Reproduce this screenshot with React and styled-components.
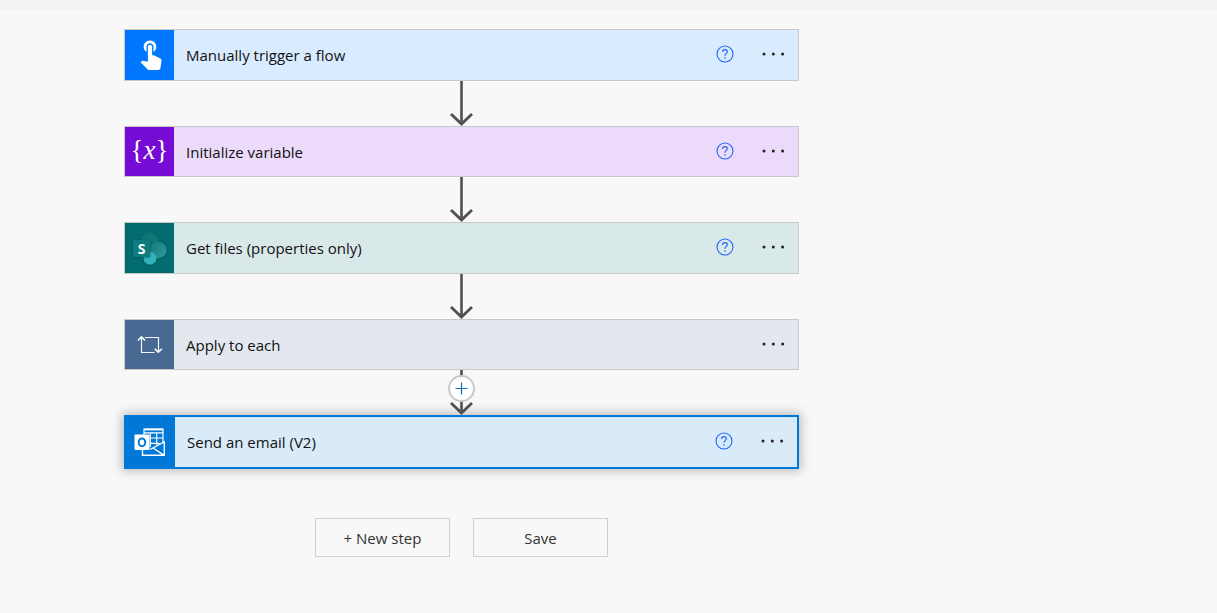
import React from "react";
import styled, { createGlobalStyle } from "styled-components";

const GlobalStyle = createGlobalStyle`
  *, *::before, *::after { box-sizing: border-box; }
  body {
    margin: 0;
    background: #f8f8f8;
    color: #111;
    font-family: "Segoe UI", "Open Sans", "Noto Sans", sans-serif;
    font-size: 15px;
    line-height: 20px;
  }
`;

const TopStrip = styled.header`
  height: 10px;
  background: #f3f3f3;
`;

const Canvas = styled.main`
  padding: 19px 124px 56px;
`;

const Flow = styled.div`
  display: flex;
  flex-direction: column;
  align-items: center;
  max-width: 675px;
`;

const Card = styled.section`
  display: flex;
  align-items: stretch;
  width: 100%;
  height: ${(p) => (p.$selected ? 54 : p.$compact ? 51 : 52)}px;
  background: ${(p) => p.$tint};
  border: ${(p) => (p.$selected ? "2px solid #0078d7" : "1px solid #c8c8c8")};
  box-shadow: ${(p) => (p.$selected ? "0 0 10px 2px rgba(0, 0, 0, 0.25)" : "none")};
`;

const IconTile = styled.div`
  display: flex;
  align-items: center;
  flex: none;
  width: 49px;
  background: ${(p) => p.$color};
`;

const Title = styled.h2`
  flex: 1;
  align-self: center;
  margin: 0;
  padding-left: 12px;
  font-size: 15px;
  font-weight: 400;
  line-height: 20px;
`;

const Actions = styled.div`
  display: flex;
  align-items: center;
  gap: 23px;
  padding: 0 9px 2px 0;
`;

const IconButton = styled.button`
  display: flex;
  align-items: center;
  justify-content: center;
  width: ${(p) => p.$width}px;
  height: 32px;
  padding: 0;
  border: 0;
  background: none;
  color: ${(p) => p.$color};
  cursor: pointer;
`;

const Connector = styled.div`
  position: relative;
  display: flex;
  justify-content: center;
  height: 45px;
`;

const InsertButton = styled.button`
  position: absolute;
  top: 5px;
  display: flex;
  align-items: center;
  justify-content: center;
  width: 27px;
  height: 27px;
  padding: 0;
  border: 2px solid #c8c8c8;
  border-radius: 50%;
  background: #fff;
  cursor: pointer;
`;

const Footer = styled.div`
  display: flex;
  gap: 23px;
  margin-top: 49px;
`;

const FooterButton = styled.button`
  width: 135px;
  height: 39px;
  padding: 0;
  border: 1px solid #d0d0d0;
  background: transparent;
  color: #333;
  font: inherit;
  cursor: pointer;
`;

const TileSvg = ({ children }) => (
  <svg width="49" height="49" viewBox="0 0 49 49" aria-hidden="true">
    {children}
  </svg>
);

const TouchIcon = () => (
  <TileSvg>
    <path
      transform="translate(8.9 5.3) scale(1.4)"
      fill="#fff"
      d="M9 11.24V7.5C9 6.12 10.12 5 11.5 5S14 6.12 14 7.5v3.74c1.21-.81 2-2.18 2-3.74C16 5.01 13.99 3 11.5 3S7 5.01 7 7.5c0 1.56.79 2.93 2 3.74zm9.84 4.63l-4.54-2.26c-.17-.07-.35-.11-.54-.11H13v-6c0-.83-.67-1.5-1.5-1.5S10 6.67 10 7.5v10.74l-3.43-.72c-.08-.01-.15-.03-.24-.03-.31 0-.59.13-.79.33l-.79.8 4.94 4.94c.27.27.65.44 1.06.44h6.79c.75 0 1.33-.55 1.44-1.28l.75-5.27c.01-.07.02-.14.02-.2 0-.62-.38-1.16-.91-1.38z"
    />
  </TileSvg>
);

const VariableIcon = () => (
  <TileSvg>
    <text
      x="24.5"
      y="32"
      fill="#fff"
      fontFamily="'Liberation Serif', serif"
      fontSize="27"
      textAnchor="middle"
    >
      {"{"}
      <tspan fontStyle="italic">x</tspan>
      {"}"}
    </text>
  </TileSvg>
);

const SharePointIcon = () => (
  <TileSvg>
    <defs>
      <filter id="sp-shadow" x="-40%" y="-40%" width="180%" height="180%">
        <feDropShadow dx="0" dy="0.5" stdDeviation="1.3" floodColor="#00302f" floodOpacity="0.5" />
      </filter>
      <linearGradient id="sp-right" x1="0" y1="0" x2="1" y2="1">
        <stop offset="0" stopColor="#16797c" />
        <stop offset="1" stopColor="#2d9ca0" />
      </linearGradient>
    </defs>
    <g filter="url(#sp-shadow)">
      <circle cx="24.5" cy="17.3" r="9" fill="#0e7679" />
      <circle cx="33.3" cy="26" r="8.2" fill="url(#sp-right)" />
      <circle cx="25" cy="34.2" r="6.4" fill="#30b3bb" />
    </g>
    <rect x="8" y="16" width="17" height="17" rx="1" fill="#0a7b7e" filter="url(#sp-shadow)" />
    <text
      x="16.5"
      y="29.500"
      fill="#fff"
      fontFamily="'Open Sans', sans-serif"
      fontSize="14"
      fontWeight="700"
      textAnchor="middle"
    >
      S
    </text>
  </TileSvg>
);

const LoopIcon = () => (
  <TileSvg>
    <g fill="none" stroke="#f2f5f9" strokeWidth="1.2">
      <path d="M16.500 17V32.500H29.500" />
      <path d="M20 17.500H33.500V32" />
      <path d="M13 20.300L16.500 17L20 20.300" strokeWidth="1.700" />
      <path d="M29.700 28.900L33.300 32.200L36.900 28.900" strokeWidth="1.700" />
    </g>
  </TileSvg>
);

const OutlookIcon = () => (
  <TileSvg>
    <g fill="none" stroke="#fff" strokeWidth="1.2">
      <path d="M18 28V11H37V25" />
      <path d="M18 11.500H37" strokeWidth="1.800" />
      <path d="M24.300 14.500V29M30.700 14.500V27M18 14.800H37M18 20H37M24 25.400H34" />
      <path d="M16.500 32V37.300H38.300V24L24 31.500M27 30L38.300 37.300" strokeWidth="1.400" />
    </g>
    <rect x="8.500" y="16.500" width="15" height="15.500" rx="1" fill="#fff" />
    <ellipse cx="16" cy="24.300" rx="3.300" ry="3.900" fill="none" stroke="#0078d7" strokeWidth="2" />
  </TileSvg>
);

const HelpIcon = () => (
  <svg width="18" height="18" viewBox="0 0 18 18" fill="none" stroke="currentColor" aria-hidden="true">
    <circle cx="9" cy="9" r="8" strokeWidth="1.1" />
    <path d="M6.600 6.900C6.600 5.400 7.600 4.600 9 4.600s2.400.9 2.400 2.100C11.400 8.400 9 8.600 9 10.800" strokeWidth="1.1" />
    <circle cx="9" cy="13" r="0.8" fill="currentColor" stroke="none" />
  </svg>
);

const MoreIcon = () => (
  <svg width="24" height="6" viewBox="0 0 24 6" fill="currentColor" aria-hidden="true">
    <circle cx="3" cy="3" r="1.500" />
    <circle cx="12.300" cy="3" r="1.500" />
    <circle cx="21.600" cy="3" r="1.500" />
  </svg>
);

const ArrowDown = () => (
  <svg width="27" height="45" viewBox="0 0 27 45" fill="none" stroke="#505050" aria-hidden="true">
    <path d="M13.500 0V43" strokeWidth="2.600" />
    <path d="M3 33L13.500 43L24 33" strokeWidth="2.800" />
  </svg>
);

const steps = [
  { title: "Manually trigger a flow", color: "#0077ff", tint: "#d9ebff", icon: TouchIcon, help: true },
  { title: "Initialize variable", color: "#770bd6", tint: "#ebdafa", icon: VariableIcon, help: true, compact: true },
  { title: "Get files (properties only)", color: "#036c70", tint: "#d9e8e9", icon: SharePointIcon, help: true },
  { title: "Apply to each", color: "#486991", tint: "#e3e7ee", icon: LoopIcon, compact: true, insertAfter: true },
  { title: "Send an email (V2)", color: "#0078d7", tint: "#d9eaf9", icon: OutlookIcon, help: true, selected: true },
];

function Step({ step }) {
  const Icon = step.icon;
  return (
    <Card $tint={step.tint} $compact={step.compact} $selected={step.selected}>
      <IconTile $color={step.color}>
        <Icon />
      </IconTile>
      <Title>{step.title}</Title>
      <Actions>
        {step.help && (
          <IconButton $width={18} $color="#1f66ff" aria-label={`Help for ${step.title}`}>
            <HelpIcon />
          </IconButton>
        )}
        <IconButton $width={32} $color="#222" aria-label={`Menu for ${step.title}`}>
          <MoreIcon />
        </IconButton>
      </Actions>
    </Card>
  );
}

export default function App() {
  return (
    <>
      <GlobalStyle />
      <TopStrip />
      <Canvas>
        <Flow>
          {steps.map((step, i) => (
            <React.Fragment key={step.title}>
              <Step step={step} />
              {i < steps.length - 1 && (
                <Connector>
                  <ArrowDown />
                  {step.insertAfter && (
                    <InsertButton aria-label="Insert a new step">
                      <svg width="13" height="13" viewBox="0 0 13 13" stroke="#0f6cbd" aria-hidden="true">
                        <path d="M6.500 0.500V12.500M0.500 6.500H12.500" strokeWidth="1.200" />
                      </svg>
                    </InsertButton>
                  )}
                </Connector>
              )}
            </React.Fragment>
          ))}
          <Footer>
            <FooterButton>+ New step</FooterButton>
            <FooterButton>Save</FooterButton>
          </Footer>
        </Flow>
      </Canvas>
    </>
  );
}
